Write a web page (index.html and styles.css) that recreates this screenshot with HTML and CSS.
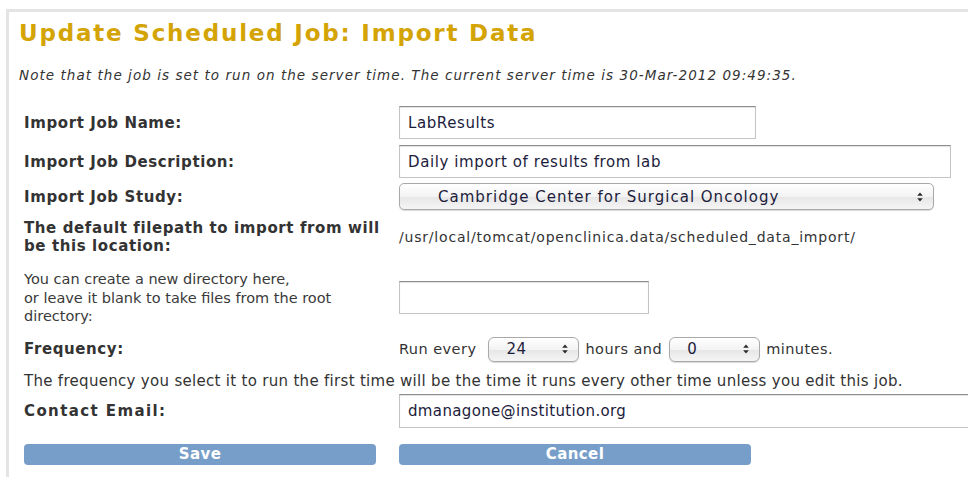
FILE: index.html
```html
<!DOCTYPE html>
<html>
<head>
<meta charset="utf-8">
<title>Update Scheduled Job: Import Data</title>
<link rel="stylesheet" href="styles.css">
</head>
<body>
<div class="panel">
  <h1 class="title">Update Scheduled Job: Import Data</h1>
  <p class="note">Note that the job is set to run on the server time. The current server time is 30-Mar-2012 09:49:35.</p>

  <form class="form">
    <div class="row row-name">
      <div class="label strong">Import Job Name:</div>
      <div class="value"><div class="input input-name">LabResults</div></div>
    </div>
    <div class="row row-desc">
      <div class="label strong">Import Job Description:</div>
      <div class="value"><div class="input input-desc">Daily import of results from lab</div></div>
    </div>
    <div class="row row-study">
      <div class="label strong">Import Job Study:</div>
      <div class="value">
        <div class="select select-study">
          <span class="select-text">Cambridge Center for Surgical Oncology</span>
          <svg class="stepper" width="8" height="12" viewBox="0 0 8 12"><path d="M4 1.5 L6.8 4.8 L1.2 4.8 Z M4 10.5 L6.8 7.2 L1.2 7.2 Z" fill="#2a2a2a"/></svg>
        </div>
      </div>
    </div>
    <div class="row row-path">
      <div class="label strong">The default filepath to import from will be this location:</div>
      <div class="value path">/usr/local/tomcat/openclinica.data/scheduled_data_import/</div>
    </div>
    <div class="row row-dir">
      <div class="label plain"><span class="plain-text">You can create a new directory here,<br>or leave it blank to take files from the root directory:</span></div>
      <div class="value"><div class="input input-dir"></div></div>
    </div>
    <div class="row row-freq">
      <div class="label strong">Frequency:</div>
      <div class="value freq">
        <span class="freq-text">Run every</span>
        <div class="select select-small">
          <span class="select-text">24</span>
          <svg class="stepper" width="8" height="12" viewBox="0 0 8 12"><path d="M4 1.5 L6.8 4.8 L1.2 4.8 Z M4 10.5 L6.8 7.2 L1.2 7.2 Z" fill="#2a2a2a"/></svg>
        </div>
        <span class="freq-text">hours and</span>
        <div class="select select-small">
          <span class="select-text">0</span>
          <svg class="stepper" width="8" height="12" viewBox="0 0 8 12"><path d="M4 1.5 L6.8 4.8 L1.2 4.8 Z M4 10.5 L6.8 7.2 L1.2 7.2 Z" fill="#2a2a2a"/></svg>
        </div>
        <span class="freq-text">minutes.</span>
      </div>
    </div>
    <div class="row row-hint">
      <div class="hint">The frequency you select it to run the first time will be the time it runs every other time unless you edit this job.</div>
    </div>
    <div class="row row-email">
      <div class="label strong email-label">Contact Email:</div>
      <div class="value"><div class="input input-email">dmanagone@institution.org</div></div>
    </div>
    <div class="row row-buttons">
      <div class="label"><button type="button" class="button">Save</button></div>
      <div class="value"><button type="button" class="button">Cancel</button></div>
    </div>
  </form>
</div>
</body>
</html>
```

FILE: styles.css
```css
html, body {
  margin: 0;
  padding: 0;
  background: #ffffff;
}

body {
  font-family: "DejaVu Sans", Verdana, sans-serif;
  color: #333333;
  overflow: hidden;
}

.panel {
  margin: 9px 0 0 6px;
  border-top: 3px solid #e4e4e4;
  border-left: 3px solid #e4e4e4;
  padding: 6px 0 20px 10px;
  min-height: 460px;
}

.title {
  margin: 0;
  font-size: 23px;
  font-weight: bold;
  line-height: 30px;
  letter-spacing: 1.8px;
  color: #d4a406;
}

.note {
  margin: 19px 0 0 0;
  font-size: 13.5px;
  font-style: italic;
  line-height: 16px;
  letter-spacing: 1.05px;
  color: #333333;
}

.form {
  margin: 0 0 0 5px;
}

.row {
  display: flex;
  align-items: center;
}

.label {
  width: 375px;
  flex: none;
  font-size: 15px;
  line-height: 18px;
}

.strong {
  font-weight: bold;
  letter-spacing: 0.6px;
  color: #333333;
}

.plain {
  font-size: 14.5px;
  line-height: 18.5px;
  color: #3a3a3a;
}

.plain-text {
  display: block;
  max-width: 360px;
}

.email-label {
  letter-spacing: 1.4px;
}

.value {
  flex: 1;
  display: flex;
  align-items: center;
  font-size: 14px;
  color: #333333;
}

.row-name { margin-top: 23px; }
.row-desc { margin-top: 6px; }
.row-study { margin-top: 5px; }
.row-path { margin-top: 9px; }
.row-dir { margin-top: 15px; }
.row-freq { margin-top: 11px; }
.row-hint { margin-top: 10px; }
.row-email { margin-top: 4px; }
.row-buttons { margin-top: 16px; }

.input {
  box-sizing: border-box;
  height: 33px;
  border: 1px solid #c4c4c4;
  border-top-color: #8e8e8e;
  box-shadow: inset 0 1px 1px rgba(0, 0, 0, 0.12);
  background: #ffffff;
  padding: 0 8px;
  display: flex;
  align-items: center;
  font-size: 15px;
  letter-spacing: 0.6px;
  color: #1c1c3c;
}

.input-name { width: 357px; }
.input-desc { width: 552px; }
.input-dir { width: 250px; }
.input-email { width: 580px; height: 34px; letter-spacing: 0.35px; }

.select {
  box-sizing: border-box;
  display: flex;
  align-items: center;
  height: 27px;
  border: 1px solid #a9a9a9;
  border-radius: 5px;
  background: linear-gradient(#ffffff, #f3f3f3 50%, #e6e6e6 51%, #f5f5f5);
  box-shadow: 0 1px 1px rgba(0, 0, 0, 0.15);
  font-size: 15px;
  letter-spacing: 1px;
  color: #1c1c3c;
}

.select-study {
  width: 535px;
  padding-left: 38px;
}

.select-text {
  flex: 1;
}

.stepper {
  flex: none;
  margin-right: 9px;
}

.select-small {
  width: 91px;
  height: 25px;
  padding-left: 17px;
  border-radius: 6px;
  letter-spacing: 0.5px;
}

.path {
  font-size: 14px;
  letter-spacing: 0.8px;
  color: #333333;
}

.freq-text {
  font-size: 14.5px;
  letter-spacing: 0.45px;
  padding: 0 7px 0 6px;
}

.freq-text:first-child {
  padding-left: 0;
  padding-right: 12px;
}

.hint {
  font-size: 15px;
  line-height: 18px;
  letter-spacing: 0.3px;
  color: #333333;
}

.button {
  box-sizing: border-box;
  height: 21px;
  border: none;
  border-radius: 4px;
  background: #779ec8;
  color: #ffffff;
  font-family: "DejaVu Sans", Verdana, sans-serif;
  font-weight: bold;
  font-size: 15px;
  letter-spacing: 0.4px;
  padding: 0;
  width: 352px;
  cursor: pointer;
}
```
